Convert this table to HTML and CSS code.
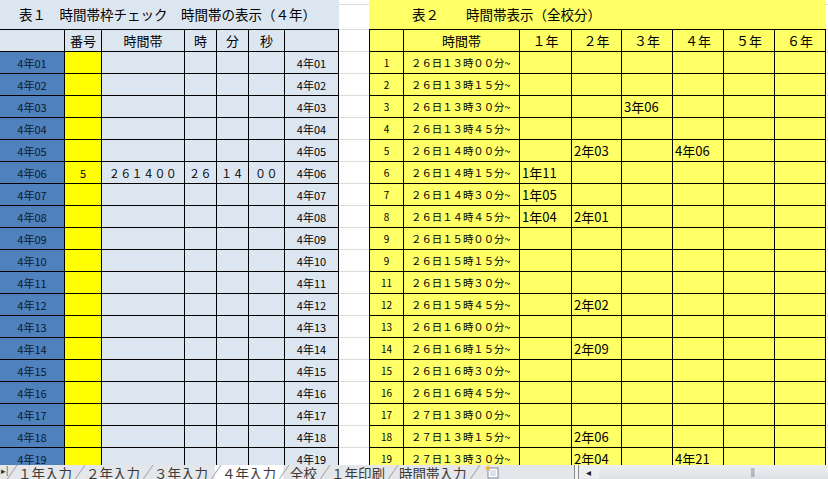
FILE: index.html
```html
<!DOCTYPE html>
<html lang="ja">
<head>
<meta charset="utf-8">
<title>時間帯枠チェック</title>
<link rel="stylesheet" href="styles.css">
</head>
<body>
<div class="sheet">
  <div class="area">
    <section class="t1">
      <div class="title">表１　時間帯枠チェック　時間帯の表示（４年）</div>
      <div class="g1">
        <div class="h"></div><div class="h">番号</div><div class="h">時間帯</div><div class="h">時</div><div class="h">分</div><div class="h">秒</div><div class="h"></div>
        <div class="b">4年01</div><div class="y"></div><div></div><div></div><div></div><div></div><div>4年01</div>
        <div class="b">4年02</div><div class="y"></div><div></div><div></div><div></div><div></div><div>4年02</div>
        <div class="b">4年03</div><div class="y"></div><div></div><div></div><div></div><div></div><div>4年03</div>
        <div class="b">4年04</div><div class="y"></div><div></div><div></div><div></div><div></div><div>4年04</div>
        <div class="b">4年05</div><div class="y"></div><div></div><div></div><div></div><div></div><div>4年05</div>
        <div class="b">4年06</div><div class="y">5</div><div class="w">２６１４００</div><div class="w">２６</div><div class="w">１４</div><div class="w">００</div><div>4年06</div>
        <div class="b">4年07</div><div class="y"></div><div></div><div></div><div></div><div></div><div>4年07</div>
        <div class="b">4年08</div><div class="y"></div><div></div><div></div><div></div><div></div><div>4年08</div>
        <div class="b">4年09</div><div class="y"></div><div></div><div></div><div></div><div></div><div>4年09</div>
        <div class="b">4年10</div><div class="y"></div><div></div><div></div><div></div><div></div><div>4年10</div>
        <div class="b">4年11</div><div class="y"></div><div></div><div></div><div></div><div></div><div>4年11</div>
        <div class="b">4年12</div><div class="y"></div><div></div><div></div><div></div><div></div><div>4年12</div>
        <div class="b">4年13</div><div class="y"></div><div></div><div></div><div></div><div></div><div>4年13</div>
        <div class="b">4年14</div><div class="y"></div><div></div><div></div><div></div><div></div><div>4年14</div>
        <div class="b">4年15</div><div class="y"></div><div></div><div></div><div></div><div></div><div>4年15</div>
        <div class="b">4年16</div><div class="y"></div><div></div><div></div><div></div><div></div><div>4年16</div>
        <div class="b">4年17</div><div class="y"></div><div></div><div></div><div></div><div></div><div>4年17</div>
        <div class="b">4年18</div><div class="y"></div><div></div><div></div><div></div><div></div><div>4年18</div>
        <div class="b">4年19</div><div class="y"></div><div></div><div></div><div></div><div></div><div>4年19</div>
      </div>
    </section>
    <div class="gap"></div>
    <section class="t2">
      <div class="title">表２　　時間帯表示（全校分）</div>
      <div class="g2">
        <div class="h"></div><div class="h">時間帯</div><div class="h">１年</div><div class="h">２年</div><div class="h">３年</div><div class="h">４年</div><div class="h">５年</div><div class="h">６年</div>
        <div class="n">1</div><div class="t">２６日１３時００分~</div><div></div><div></div><div></div><div></div><div></div><div></div>
        <div class="n">2</div><div class="t">２６日１３時１５分~</div><div></div><div></div><div></div><div></div><div></div><div></div>
        <div class="n">3</div><div class="t">２６日１３時３０分~</div><div></div><div></div><div class="v">3年06</div><div></div><div></div><div></div>
        <div class="n">4</div><div class="t">２６日１３時４５分~</div><div></div><div></div><div></div><div></div><div></div><div></div>
        <div class="n">5</div><div class="t">２６日１４時００分~</div><div></div><div class="v">2年03</div><div></div><div class="v">4年06</div><div></div><div></div>
        <div class="n">6</div><div class="t">２６日１４時１５分~</div><div class="v">1年11</div><div></div><div></div><div></div><div></div><div></div>
        <div class="n">7</div><div class="t">２６日１４時３０分~</div><div class="v">1年05</div><div></div><div></div><div></div><div></div><div></div>
        <div class="n">8</div><div class="t">２６日１４時４５分~</div><div class="v">1年04</div><div class="v">2年01</div><div></div><div></div><div></div><div></div>
        <div class="n">9</div><div class="t">２６日１５時００分~</div><div></div><div></div><div></div><div></div><div></div><div></div>
        <div class="n">9</div><div class="t">２６日１５時１５分~</div><div></div><div></div><div></div><div></div><div></div><div></div>
        <div class="n">11</div><div class="t">２６日１５時３０分~</div><div></div><div></div><div></div><div></div><div></div><div></div>
        <div class="n">12</div><div class="t">２６日１５時４５分~</div><div></div><div class="v">2年02</div><div></div><div></div><div></div><div></div>
        <div class="n">13</div><div class="t">２６日１６時００分~</div><div></div><div></div><div></div><div></div><div></div><div></div>
        <div class="n">14</div><div class="t">２６日１６時１５分~</div><div></div><div class="v">2年09</div><div></div><div></div><div></div><div></div>
        <div class="n">15</div><div class="t">２６日１６時３０分~</div><div></div><div></div><div></div><div></div><div></div><div></div>
        <div class="n">16</div><div class="t">２６日１６時４５分~</div><div></div><div></div><div></div><div></div><div></div><div></div>
        <div class="n">17</div><div class="t">２７日１３時００分~</div><div></div><div></div><div></div><div></div><div></div><div></div>
        <div class="n">18</div><div class="t">２７日１３時１５分~</div><div></div><div class="v">2年06</div><div></div><div></div><div></div><div></div>
        <div class="n">19</div><div class="t">２７日１３時３０分~</div><div></div><div class="v">2年04</div><div></div><div class="v">4年21</div><div></div><div></div>
      </div>
    </section>
    <div class="edge"></div>
  </div>
  <div class="tabs">
    <span class="nav">▸|</span>
    <span class="tab">１年入力</span>
    <span class="tab">２年入力</span>
    <span class="tab">３年入力</span>
    <span class="tab active">４年入力</span>
    <span class="tab">全校</span>
    <span class="tab">１年印刷</span>
    <span class="tab">時間帯入力</span>
    <span class="tab newsheet"><svg width="16" height="14" viewBox="0 0 16 14"><rect x="4" y="3" width="10" height="10" fill="#fff" stroke="#7a8aa0"/><path d="M6 6h6M6 8h6M6 10h6" stroke="#b8c4d4"/><path d="M4 0l1 2 2 0-1.5 1.5 .5 2-2-1-2 1 .5-2L1 2h2z" fill="#f0b030"/></svg></span>
    <span class="spacer"></span>
    <span class="split"></span>
    <span class="arrow">◂</span>
    <span class="track"><span class="grip">|||</span></span>
  </div>
</div>
</body>
</html>
```

FILE: styles.css
```css
* { box-sizing: border-box; }
html, body { margin: 0; padding: 0; background: #fff; }
body {
  font-family: "Noto Sans CJK JP", "Noto Sans", sans-serif;
  color: #000;
  width: 828px;
  height: 479px;
  overflow: hidden;
}
.sheet { width: 828px; height: 479px; display: flex; flex-direction: column; }
.area {
  height: 465px;
  overflow: hidden;
  display: flex;
  align-items: flex-start;
}
.title {
  height: 29px;
  line-height: 28px;
  font-size: 13.5px;
  white-space: nowrap;
}
.t1 { width: 339px; flex: none; }
.t1 .title { background: #dce6f1; padding-left: 19px; }
.g1 {
  display: grid;
  grid-template-columns: 65px 37px 83px 32px 32px 36px 54px;
  grid-auto-rows: 22px;
  border-top: 1px solid #000;
}
.g1 > div, .g2 > div {
  border-right: 1px solid #000;
  border-bottom: 1px solid #000;
  display: flex;
  align-items: center;
  justify-content: center;
  font-size: 11px;
  white-space: nowrap;
  overflow: hidden;
}
.g1 > div { background: #dce6f1; }
.g1 > .b { background: #4f81bd; color: #0b1a2e; }
.g1 > .y { background: #ffff00; }
.g1 > .w { letter-spacing: 0.4px; }
.g1 > .h, .g2 > .h { font-size: 13px; }
.gap, .edge {
  height: 465px;
  background-image: linear-gradient(#dadcdd, #dadcdd);
  background-image: repeating-linear-gradient(to bottom, transparent 0 21px, #dadcdd 21px 22px);
  background-position: 0 8px;
}
.gap { width: 30px; flex: none; }
.edge { flex: 1; }
.t2 { width: 457px; flex: none; }
.t2 .title { background: #ffff66; padding-left: 43px; }
.g2 {
  display: grid;
  grid-template-columns: 34px 116px 52px 50px 51px 51px 51px 51px;
  grid-auto-rows: 22px;
  border-top: 1px solid #000;
  border-left: 1px solid #000;
}
.g2 > div { background: #ffff66; }
.g2 > .n { font-size: 10px; }
.g2 > .t { justify-content: flex-start; padding-left: 7px; font-size: 10.4px; }
.g2 > .v { justify-content: flex-start; padding-left: 2px; font-size: 13px; }

.tabs {
  height: 14px;
  overflow: hidden;
  display: flex;
  align-items: flex-start;
  background: #e4e6e9;
  font-size: 13.5px;
  line-height: 17px;
  color: #3a3a3a;
  white-space: nowrap;
}
.nav { width: 11px; font-size: 9px; line-height: 12px; color: #333; padding-left: 1px; flex: none; }
.tab {
  position: relative;
  padding: 0 7px 0 7px;
  flex: none;
}
.tab::before {
  content: "";
  position: absolute;
  left: 0;
  top: 0;
  width: 1px;
  height: 16px;
  background: #9aa0a8;
  transform: skewX(-35deg);
}
.tab.active { background: #fff; }
.newsheet { padding: 0 10px; }
.newsheet svg { display: block; margin-top: 0; }
.spacer { width: 64px; flex: none; }
.split { width: 5px; height: 14px; border-left: 1px solid #8a8a8a; border-right: 1px solid #8a8a8a; background: #f4f4f4; flex: none; }
.arrow { width: 20px; font-size: 10px; line-height: 13px; text-align: center; color: #222; flex: none; background: #eceef0; }
.track { flex: 1; background: linear-gradient(#eef0f2, #dde0e4); position: relative; height: 14px; }
.grip { position: absolute; left: 152px; top: 1px; font-size: 8px; line-height: 12px; color: #777; letter-spacing: -1px; }
```
